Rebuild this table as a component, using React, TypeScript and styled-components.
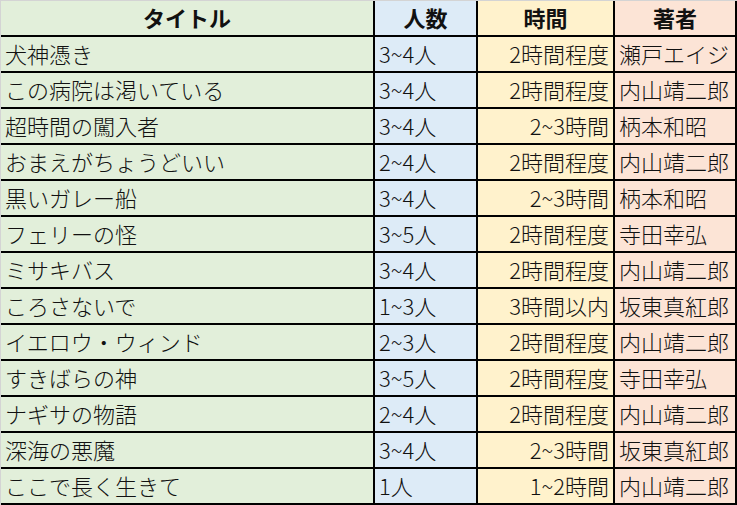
import React from "react";
import styled, { createGlobalStyle } from "styled-components";

const Global = createGlobalStyle`
  html, body { margin: 0; padding: 0; background: #ffffff; }
  body { font-family: "Noto Sans CJK JP", "Noto Sans", sans-serif; }
`;

type Tone = "green" | "blue" | "yellow" | "orange";

const tones: Record<Tone, string> = {
  green: "#e2efda",
  blue: "#ddebf7",
  yellow: "#fff2cc",
  orange: "#fce4d6",
};

const Frame = styled.div`
  width: 737px;
  height: 505px;
  box-sizing: border-box;
  border-top: 1px solid #d4d4d4;
  border-left: 1px solid #d4d4d4;
  overflow: hidden;
`;

const Sheet = styled.div`
  display: grid;
  grid-template-columns: 372px 101px 135px 120px;
  grid-auto-rows: 34px;
  column-gap: 2px;
  row-gap: 2px;
  padding: 0 2px 2px 0;
  background: #000000;
  width: max-content;
`;

const Cell = styled.div<{ $tone: Tone; $align?: "left" | "right" | "center"; $head?: boolean }>`
  background: ${(p) => tones[p.$tone]};
  display: flex;
  align-items: center;
  justify-content: ${(p) =>
    p.$align === "right" ? "flex-end" : p.$align === "center" ? "center" : "flex-start"};
  padding: 0 4px 3px 4px;
  box-sizing: border-box;
  font-size: 22px;
  font-weight: ${(p) => (p.$head ? 700 : 300)};
  color: #111111;
  white-space: nowrap;
  overflow: hidden;
  line-height: 1;
`;

const rows: [string, string, string, string][] = [
  ["犬神憑き", "3~4人", "2時間程度", "瀬戸エイジ"],
  ["この病院は渇いている", "3~4人", "2時間程度", "内山靖二郎"],
  ["超時間の闖入者", "3~4人", "2~3時間", "柄本和昭"],
  ["おまえがちょうどいい", "2~4人", "2時間程度", "内山靖二郎"],
  ["黒いガレー船", "3~4人", "2~3時間", "柄本和昭"],
  ["フェリーの怪", "3~5人", "2時間程度", "寺田幸弘"],
  ["ミサキバス", "3~4人", "2時間程度", "内山靖二郎"],
  ["ころさないで", "1~3人", "3時間以内", "坂東真紅郎"],
  ["イエロウ・ウィンド", "2~3人", "2時間程度", "内山靖二郎"],
  ["すきばらの神", "3~5人", "2時間程度", "寺田幸弘"],
  ["ナギサの物語", "2~4人", "2時間程度", "内山靖二郎"],
  ["深海の悪魔", "3~4人", "2~3時間", "坂東真紅郎"],
  ["ここで長く生きて", "1人", "1~2時間", "内山靖二郎"],
];

export default function App() {
  return (
    <>
      <Global />
      <Frame>
        <Sheet>
          <Cell $tone="green" $align="center" $head>タイトル</Cell>
          <Cell $tone="blue" $align="center" $head>人数</Cell>
          <Cell $tone="yellow" $align="center" $head>時間</Cell>
          <Cell $tone="orange" $align="center" $head>著者</Cell>
          {rows.map(([title, people, time, author]) => (
            <React.Fragment key={title}>
              <Cell $tone="green">{title}</Cell>
              <Cell $tone="blue">{people}</Cell>
              <Cell $tone="yellow" $align="right">{time}</Cell>
              <Cell $tone="orange">{author}</Cell>
            </React.Fragment>
          ))}
        </Sheet>
      </Frame>
    </>
  );
}
